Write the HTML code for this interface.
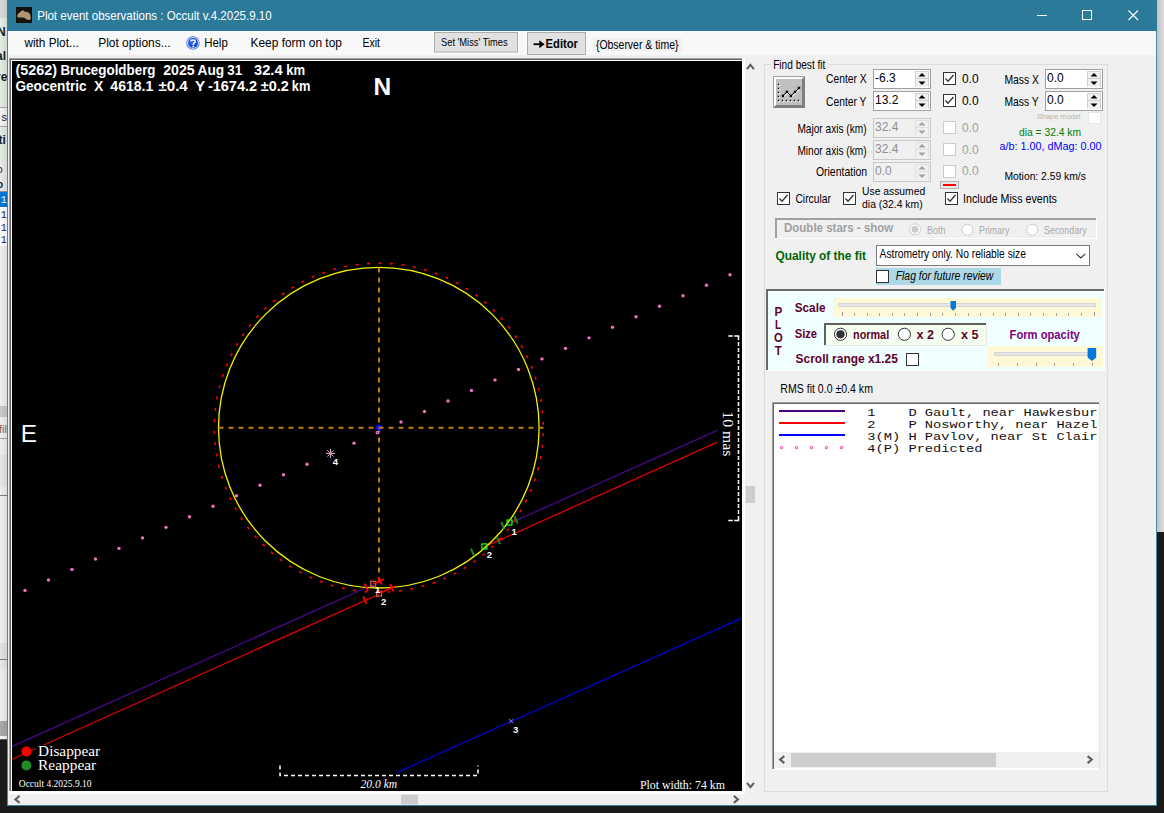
<!DOCTYPE html>
<html><head><meta charset="utf-8"><title>Plot event observations : Occult v.4.2025.9.10</title>
<style>html,body{margin:0;padding:0;background:#1b1b1b;overflow:hidden} svg{display:block} text{white-space:pre}</style></head>
<body><svg width="1164" height="813" viewBox="0 0 1164 813">
<rect x="0" y="0" width="1164" height="813" fill="#1b1b1b" />
<rect x="0" y="0" width="7" height="806" fill="#eeeeee" />
<rect x="0" y="0" width="7" height="18" fill="#d9d9d9" />
<rect x="0" y="18" width="7" height="89" fill="#e3ede3" />
<rect x="0" y="107" width="7" height="1" fill="#a8a8a8" />
<rect x="0" y="108" width="7" height="18" fill="#f4f4f4" />
<rect x="0" y="126" width="7" height="1" fill="#a8a8a8" />
<rect x="0" y="127" width="7" height="32" fill="#e3ede3" />
<rect x="0" y="159" width="7" height="33" fill="#e9e9e9" />
<rect x="0" y="191" width="7" height="1" fill="#909090" />
<rect x="0" y="192" width="7" height="15" fill="#0078d7" />
<rect x="0" y="207" width="7" height="39" fill="#ffffff" />
<rect x="0" y="246" width="7" height="160" fill="#efefef" />
<rect x="0" y="406" width="7" height="11" fill="#c9c9c9" />
<rect x="0" y="438" width="7" height="1" fill="#a0a0a0" />
<rect x="0" y="455" width="7" height="31" fill="#e6e6e6" />
<rect x="0" y="495" width="7" height="1" fill="#808080" />
<rect x="0" y="643" width="7" height="16" fill="#e3e3e3" />
<rect x="0" y="659" width="7" height="1" fill="#808080" />
<rect x="0" y="660" width="7" height="8" fill="#e8e8e8" />
<rect x="0" y="721" width="7" height="15" fill="#a9a9a9" />
<rect x="0" y="736" width="7" height="3" fill="#f4f4f4" />
<rect x="0" y="739" width="7" height="1" fill="#606060" />
<rect x="0" y="740" width="7" height="73" fill="#1b1b1b" />
<rect x="0" y="0" width="7" height="740" fill="url(#lg)" />
<text transform="translate(-3.00,36.00)" font-family="Liberation Sans" font-size="12" font-weight="bold" fill="#1a1a1a" >N</text>
<text transform="translate(-4.00,59.70)" font-family="Liberation Sans" font-size="12" font-weight="bold" fill="#1a1a1a" >al</text>
<text transform="translate(-4.00,80.90)" font-family="Liberation Sans" font-size="12" font-weight="bold" fill="#1a1a1a" >re</text>
<text transform="translate(1.50,121.00)" font-family="Liberation Sans" font-size="11" fill="#1a1a50" >s</text>
<text transform="translate(-1.50,144.00)" font-family="Liberation Sans" font-size="12" font-weight="bold" fill="#1a1a1a" >ti</text>
<text transform="translate(-3.00,173.00)" font-family="Liberation Sans" font-size="10" fill="#1a1a1a" >o</text>
<text transform="translate(-3.00,187.70)" font-family="Liberation Sans" font-size="10" font-weight="bold" fill="#1a1a1a" >o</text>
<text transform="translate(0.80,203.20)" font-family="Liberation Mono" font-size="10" fill="#ffffff" >1</text>
<text transform="translate(0.80,218.00)" font-family="Liberation Mono" font-size="10" fill="#202050" >1</text>
<text transform="translate(0.80,230.60)" font-family="Liberation Mono" font-size="10" fill="#202050" >1</text>
<text transform="translate(0.80,243.20)" font-family="Liberation Mono" font-size="10" fill="#202050" >1</text>
<text transform="translate(-1.00,433.00)" font-family="Liberation Sans" font-size="11" fill="#806060" >fil</text>
<defs><linearGradient id="rg" x1="0" x2="1"><stop offset="0" stop-color="#c4c4c4"/><stop offset="1" stop-color="#dcdcdc"/></linearGradient><linearGradient id="lg" x1="0" x2="1"><stop offset="0" stop-color="#000" stop-opacity="0"/><stop offset="1" stop-color="#000" stop-opacity="0.08"/></linearGradient></defs>
<rect x="1157" y="0" width="7" height="532" fill="url(#rg)" />
<rect x="1157" y="532" width="7" height="281" fill="#1b1b1b" />
<rect x="7" y="0" width="1150" height="806" fill="#2c7a9a" />
<rect x="7" y="31" width="1" height="775" fill="#468aa6" />
<rect x="1156" y="31" width="1" height="775" fill="#468aa6" />
<rect x="7" y="805" width="1150" height="1" fill="#3a7f9c" />
<rect x="8" y="31" width="1148" height="774" fill="#f0f0f0" />
<rect x="16" y="7" width="16" height="16" fill="#15110d" />
<path d="M17.2,16.6 C17.3,15 17.8,14.2 18.4,13.6 C19.4,12.4 20.4,11.5 21.4,10.9 C22.2,10.4 22.8,10.1 23.3,10.2 C23.9,10.4 24,11.2 24.3,11.6 C25.2,12 26.2,11.9 27,12.1 C28,12.3 28.8,12.6 29.3,13.1 C30,14 30.4,15 30.5,16.1 C30.8,17 30.9,18 30.7,18.8 C30.3,19.6 29.5,20 28.8,20 C27.8,20 27.1,19.8 26.5,19.3 C25.6,18.8 25,18.1 24.3,17.8 C23.3,17.5 22.3,17.6 21.4,17.5 C20.3,17.5 19.3,17.7 18.4,17.5 C17.7,17.3 17.2,17 17.2,16.6 Z" fill="#b39470"/>
<text transform="translate(37.20,20.00) scale(0.9621,1.0)" font-family="Liberation Sans" font-size="12" fill="#ffffff" >Plot event observations : Occult v.4.2025.9.10</text>
<line x1="1037" y1="15.5" x2="1047" y2="15.5" stroke="#ffffff" stroke-width="1" />
<rect x="1082.5" y="10.5" width="9" height="9" fill="none" stroke="#ffffff" stroke-width="1"/>
<line x1="1128.5" y1="10.5" x2="1138" y2="20" stroke="#ffffff" stroke-width="1.1" />
<line x1="1138" y1="10.5" x2="1128.5" y2="20" stroke="#ffffff" stroke-width="1.1" />
<rect x="8" y="31" width="1148" height="24" fill="#f8f8f8" />
<text transform="translate(24.38,46.90) scale(0.9836,1.0)" font-family="Liberation Sans" font-size="12" fill="#000" >with Plot...</text>
<text transform="translate(98.20,46.90) scale(0.9976,1.0)" font-family="Liberation Sans" font-size="12" fill="#000" >Plot options...</text>
<defs><radialGradient id="hg" cx="0.4" cy="0.35" r="0.7"><stop offset="0" stop-color="#3f70ff"/><stop offset="1" stop-color="#0a3cc0"/></radialGradient></defs>
<circle cx="193" cy="43" r="6.8" fill="#5f86d2"/>
<circle cx="193" cy="43" r="5.8" fill="#d8e6fb"/>
<circle cx="193" cy="43" r="4.9" fill="url(#hg)"/>
<path d="M191,41.3 C191,39.6 195.2,39.4 195.2,41.4 C195.2,42.9 193.2,43 193.2,45" fill="none" stroke="#ffffff" stroke-width="1.5"/>
<rect x="192.4" y="45.9" width="1.6" height="1.5" fill="#ffffff" />
<text transform="translate(204.20,46.90) scale(0.9558,1.0)" font-family="Liberation Sans" font-size="12" fill="#000" >Help</text>
<text transform="translate(250.50,46.50) scale(0.9937,1.0)" font-family="Liberation Sans" font-size="12" fill="#000" >Keep form on top</text>
<text transform="translate(362.40,46.50) scale(0.8805,1.0)" font-family="Liberation Sans" font-size="12" fill="#000" >Exit</text>
<rect x="434.5" y="32.5" width="83" height="19.5" fill="#e1e1e1" stroke="#adadad"/>
<text transform="translate(441.00,45.90) scale(0.8469,1.0)" font-family="Liberation Sans" font-size="11" fill="#000" >Set &#x27;Miss&#x27; Times</text>
<rect x="527.5" y="32.5" width="58" height="22" fill="#e1e1e1" stroke="#adadad"/>
<path d="M533.5,44.2 H542" stroke="#000" stroke-width="1.8"/><path d="M539.3,40.2 L544.6,44.2 L539.3,48.2 Z" fill="#000"/>
<text transform="translate(545.60,48.10) scale(0.8641,1.0)" font-family="Liberation Sans" font-size="13" font-weight="bold" fill="#000" >Editor</text>
<rect x="593" y="38" width="89" height="13" fill="#f0f0f0" />
<text transform="translate(595.90,48.50) scale(0.8723,1.0)" font-family="Liberation Sans" font-size="12" fill="#000" >{Observer &amp; time}</text>
<rect x="9" y="58" width="736" height="736" fill="#ffffff" />
<rect x="9" y="58" width="733" height="1" fill="#a0a0a0" />
<rect x="9" y="58" width="1" height="733" fill="#a0a0a0" />
<rect x="10" y="59" width="732" height="1" fill="#696969" />
<rect x="10" y="59" width="1" height="732" fill="#696969" />
<rect x="11" y="60" width="731" height="1" fill="#ffffff" />
<rect x="11" y="60" width="1" height="731" fill="#ffffff" />
<rect x="12" y="61" width="730" height="730" fill="#000000" />
<svg x="12" y="61" width="730" height="730" viewBox="12 61 730 730" overflow="hidden">
<line x1="12" y1="746.5" x2="373.2" y2="584.57404" stroke="#4a0a90" stroke-width="1.2" />
<line x1="509.5" y1="523.47075" x2="742" y2="419.24100000000004" stroke="#4a0a90" stroke-width="1.2" />
<line x1="12" y1="759.3" x2="379.1" y2="594.2518399999999" stroke="#ee0000" stroke-width="1.2" />
<line x1="484.4" y1="546.90896" x2="742" y2="431.0919999999999" stroke="#ee0000" stroke-width="1.2" />
<line x1="396.6" y1="772.7" x2="742" y2="618.06442" stroke="#0000e6" stroke-width="1.2" />
<rect x="36" y="745" width="70" height="28" fill="#000000" />
<rect x="717.5" y="400" width="24" height="62" fill="#000000" />
<rect x="-1.5" y="-0.8" width="3" height="1.6" fill="#ff0000" transform="translate(380.09,263.21) rotate(0.45)"/>
<rect x="-1.5" y="-0.8" width="3" height="1.6" fill="#ff0000" transform="translate(391.56,263.70) rotate(4.45)"/>
<rect x="-1.5" y="-0.8" width="3" height="1.6" fill="#ff0000" transform="translate(402.97,264.99) rotate(8.45)"/>
<rect x="-1.5" y="-0.8" width="3" height="1.6" fill="#ff0000" transform="translate(414.26,267.07) rotate(12.45)"/>
<rect x="-1.5" y="-0.8" width="3" height="1.6" fill="#ff0000" transform="translate(425.38,269.93) rotate(16.45)"/>
<rect x="-1.5" y="-0.8" width="3" height="1.6" fill="#ff0000" transform="translate(436.27,273.57) rotate(20.45)"/>
<rect x="-1.5" y="-0.8" width="3" height="1.6" fill="#ff0000" transform="translate(446.89,277.95) rotate(24.45)"/>
<rect x="-1.5" y="-0.8" width="3" height="1.6" fill="#ff0000" transform="translate(457.17,283.07) rotate(28.45)"/>
<rect x="-1.5" y="-0.8" width="3" height="1.6" fill="#ff0000" transform="translate(467.06,288.89) rotate(32.45)"/>
<rect x="-1.5" y="-0.8" width="3" height="1.6" fill="#ff0000" transform="translate(476.53,295.38) rotate(36.45)"/>
<rect x="-1.5" y="-0.8" width="3" height="1.6" fill="#ff0000" transform="translate(485.53,302.52) rotate(40.45)"/>
<rect x="-1.5" y="-0.8" width="3" height="1.6" fill="#ff0000" transform="translate(494.00,310.27) rotate(44.45)"/>
<rect x="-1.5" y="-0.8" width="3" height="1.6" fill="#ff0000" transform="translate(501.91,318.59) rotate(48.45)"/>
<rect x="-1.5" y="-0.8" width="3" height="1.6" fill="#ff0000" transform="translate(509.22,327.44) rotate(52.45)"/>
<rect x="-1.5" y="-0.8" width="3" height="1.6" fill="#ff0000" transform="translate(515.89,336.79) rotate(56.45)"/>
<rect x="-1.5" y="-0.8" width="3" height="1.6" fill="#ff0000" transform="translate(521.90,346.57) rotate(60.45)"/>
<rect x="-1.5" y="-0.8" width="3" height="1.6" fill="#ff0000" transform="translate(527.21,356.75) rotate(64.45)"/>
<rect x="-1.5" y="-0.8" width="3" height="1.6" fill="#ff0000" transform="translate(531.80,367.28) rotate(68.45)"/>
<rect x="-1.5" y="-0.8" width="3" height="1.6" fill="#ff0000" transform="translate(535.64,378.10) rotate(72.45)"/>
<rect x="-1.5" y="-0.8" width="3" height="1.6" fill="#ff0000" transform="translate(538.72,389.16) rotate(76.45)"/>
<rect x="-1.5" y="-0.8" width="3" height="1.6" fill="#ff0000" transform="translate(541.02,400.41) rotate(80.45)"/>
<rect x="-1.5" y="-0.8" width="3" height="1.6" fill="#ff0000" transform="translate(542.53,411.79) rotate(84.45)"/>
<rect x="-1.5" y="-0.8" width="3" height="1.6" fill="#ff0000" transform="translate(543.24,423.25) rotate(88.45)"/>
<rect x="-1.5" y="-0.8" width="3" height="1.6" fill="#ff0000" transform="translate(543.15,434.73) rotate(92.45)"/>
<rect x="-1.5" y="-0.8" width="3" height="1.6" fill="#ff0000" transform="translate(542.26,446.18) rotate(96.45)"/>
<rect x="-1.5" y="-0.8" width="3" height="1.6" fill="#ff0000" transform="translate(540.57,457.54) rotate(100.45)"/>
<rect x="-1.5" y="-0.8" width="3" height="1.6" fill="#ff0000" transform="translate(538.10,468.75) rotate(104.45)"/>
<rect x="-1.5" y="-0.8" width="3" height="1.6" fill="#ff0000" transform="translate(534.84,479.76) rotate(108.45)"/>
<rect x="-1.5" y="-0.8" width="3" height="1.6" fill="#ff0000" transform="translate(530.83,490.52) rotate(112.45)"/>
<rect x="-1.5" y="-0.8" width="3" height="1.6" fill="#ff0000" transform="translate(526.08,500.97) rotate(116.45)"/>
<rect x="-1.5" y="-0.8" width="3" height="1.6" fill="#ff0000" transform="translate(520.61,511.07) rotate(120.45)"/>
<rect x="-1.5" y="-0.8" width="3" height="1.6" fill="#ff0000" transform="translate(514.45,520.76) rotate(124.45)"/>
<rect x="-1.5" y="-0.8" width="3" height="1.6" fill="#ff0000" transform="translate(507.63,529.99) rotate(128.45)"/>
<rect x="-1.5" y="-0.8" width="3" height="1.6" fill="#ff0000" transform="translate(500.18,538.73) rotate(132.45)"/>
<rect x="-1.5" y="-0.8" width="3" height="1.6" fill="#ff0000" transform="translate(492.14,546.93) rotate(136.45)"/>
<rect x="-1.5" y="-0.8" width="3" height="1.6" fill="#ff0000" transform="translate(483.55,554.54) rotate(140.45)"/>
<rect x="-1.5" y="-0.8" width="3" height="1.6" fill="#ff0000" transform="translate(474.44,561.54) rotate(144.45)"/>
<rect x="-1.5" y="-0.8" width="3" height="1.6" fill="#ff0000" transform="translate(464.87,567.88) rotate(148.45)"/>
<rect x="-1.5" y="-0.8" width="3" height="1.6" fill="#ff0000" transform="translate(454.88,573.55) rotate(152.45)"/>
<rect x="-1.5" y="-0.8" width="3" height="1.6" fill="#ff0000" transform="translate(444.53,578.50) rotate(156.45)"/>
<rect x="-1.5" y="-0.8" width="3" height="1.6" fill="#ff0000" transform="translate(433.85,582.72) rotate(160.45)"/>
<rect x="-1.5" y="-0.8" width="3" height="1.6" fill="#ff0000" transform="translate(422.90,586.18) rotate(164.45)"/>
<rect x="-1.5" y="-0.8" width="3" height="1.6" fill="#ff0000" transform="translate(411.74,588.87) rotate(168.45)"/>
<rect x="-1.5" y="-0.8" width="3" height="1.6" fill="#ff0000" transform="translate(400.41,590.77) rotate(172.45)"/>
<rect x="-1.5" y="-0.8" width="3" height="1.6" fill="#ff0000" transform="translate(388.99,591.88) rotate(176.45)"/>
<rect x="-1.5" y="-0.8" width="3" height="1.6" fill="#ff0000" transform="translate(377.51,592.19) rotate(180.45)"/>
<rect x="-1.5" y="-0.8" width="3" height="1.6" fill="#ff0000" transform="translate(366.04,591.70) rotate(184.45)"/>
<rect x="-1.5" y="-0.8" width="3" height="1.6" fill="#ff0000" transform="translate(354.63,590.41) rotate(188.45)"/>
<rect x="-1.5" y="-0.8" width="3" height="1.6" fill="#ff0000" transform="translate(343.34,588.33) rotate(192.45)"/>
<rect x="-1.5" y="-0.8" width="3" height="1.6" fill="#ff0000" transform="translate(332.22,585.47) rotate(196.45)"/>
<rect x="-1.5" y="-0.8" width="3" height="1.6" fill="#ff0000" transform="translate(321.33,581.83) rotate(200.45)"/>
<rect x="-1.5" y="-0.8" width="3" height="1.6" fill="#ff0000" transform="translate(310.71,577.45) rotate(204.45)"/>
<rect x="-1.5" y="-0.8" width="3" height="1.6" fill="#ff0000" transform="translate(300.43,572.33) rotate(208.45)"/>
<rect x="-1.5" y="-0.8" width="3" height="1.6" fill="#ff0000" transform="translate(290.54,566.51) rotate(212.45)"/>
<rect x="-1.5" y="-0.8" width="3" height="1.6" fill="#ff0000" transform="translate(281.07,560.02) rotate(216.45)"/>
<rect x="-1.5" y="-0.8" width="3" height="1.6" fill="#ff0000" transform="translate(272.07,552.88) rotate(220.45)"/>
<rect x="-1.5" y="-0.8" width="3" height="1.6" fill="#ff0000" transform="translate(263.60,545.13) rotate(224.45)"/>
<rect x="-1.5" y="-0.8" width="3" height="1.6" fill="#ff0000" transform="translate(255.69,536.81) rotate(228.45)"/>
<rect x="-1.5" y="-0.8" width="3" height="1.6" fill="#ff0000" transform="translate(248.38,527.96) rotate(232.45)"/>
<rect x="-1.5" y="-0.8" width="3" height="1.6" fill="#ff0000" transform="translate(241.71,518.61) rotate(236.45)"/>
<rect x="-1.5" y="-0.8" width="3" height="1.6" fill="#ff0000" transform="translate(235.70,508.83) rotate(240.45)"/>
<rect x="-1.5" y="-0.8" width="3" height="1.6" fill="#ff0000" transform="translate(230.39,498.65) rotate(244.45)"/>
<rect x="-1.5" y="-0.8" width="3" height="1.6" fill="#ff0000" transform="translate(225.80,488.12) rotate(248.45)"/>
<rect x="-1.5" y="-0.8" width="3" height="1.6" fill="#ff0000" transform="translate(221.96,477.30) rotate(252.45)"/>
<rect x="-1.5" y="-0.8" width="3" height="1.6" fill="#ff0000" transform="translate(218.88,466.24) rotate(256.45)"/>
<rect x="-1.5" y="-0.8" width="3" height="1.6" fill="#ff0000" transform="translate(216.58,454.99) rotate(260.45)"/>
<rect x="-1.5" y="-0.8" width="3" height="1.6" fill="#ff0000" transform="translate(215.07,443.61) rotate(264.45)"/>
<rect x="-1.5" y="-0.8" width="3" height="1.6" fill="#ff0000" transform="translate(214.36,432.15) rotate(268.45)"/>
<rect x="-1.5" y="-0.8" width="3" height="1.6" fill="#ff0000" transform="translate(214.45,420.67) rotate(272.45)"/>
<rect x="-1.5" y="-0.8" width="3" height="1.6" fill="#ff0000" transform="translate(215.34,409.22) rotate(276.45)"/>
<rect x="-1.5" y="-0.8" width="3" height="1.6" fill="#ff0000" transform="translate(217.03,397.86) rotate(280.45)"/>
<rect x="-1.5" y="-0.8" width="3" height="1.6" fill="#ff0000" transform="translate(219.50,386.65) rotate(284.45)"/>
<rect x="-1.5" y="-0.8" width="3" height="1.6" fill="#ff0000" transform="translate(222.76,375.64) rotate(288.45)"/>
<rect x="-1.5" y="-0.8" width="3" height="1.6" fill="#ff0000" transform="translate(226.77,364.88) rotate(292.45)"/>
<rect x="-1.5" y="-0.8" width="3" height="1.6" fill="#ff0000" transform="translate(231.52,354.43) rotate(296.45)"/>
<rect x="-1.5" y="-0.8" width="3" height="1.6" fill="#ff0000" transform="translate(236.99,344.33) rotate(300.45)"/>
<rect x="-1.5" y="-0.8" width="3" height="1.6" fill="#ff0000" transform="translate(243.15,334.64) rotate(304.45)"/>
<rect x="-1.5" y="-0.8" width="3" height="1.6" fill="#ff0000" transform="translate(249.97,325.41) rotate(308.45)"/>
<rect x="-1.5" y="-0.8" width="3" height="1.6" fill="#ff0000" transform="translate(257.42,316.67) rotate(312.45)"/>
<rect x="-1.5" y="-0.8" width="3" height="1.6" fill="#ff0000" transform="translate(265.46,308.47) rotate(316.45)"/>
<rect x="-1.5" y="-0.8" width="3" height="1.6" fill="#ff0000" transform="translate(274.05,300.86) rotate(320.45)"/>
<rect x="-1.5" y="-0.8" width="3" height="1.6" fill="#ff0000" transform="translate(283.16,293.86) rotate(324.45)"/>
<rect x="-1.5" y="-0.8" width="3" height="1.6" fill="#ff0000" transform="translate(292.73,287.52) rotate(328.45)"/>
<rect x="-1.5" y="-0.8" width="3" height="1.6" fill="#ff0000" transform="translate(302.72,281.85) rotate(332.45)"/>
<rect x="-1.5" y="-0.8" width="3" height="1.6" fill="#ff0000" transform="translate(313.07,276.90) rotate(336.45)"/>
<rect x="-1.5" y="-0.8" width="3" height="1.6" fill="#ff0000" transform="translate(323.75,272.68) rotate(340.45)"/>
<rect x="-1.5" y="-0.8" width="3" height="1.6" fill="#ff0000" transform="translate(334.70,269.22) rotate(344.45)"/>
<rect x="-1.5" y="-0.8" width="3" height="1.6" fill="#ff0000" transform="translate(345.86,266.53) rotate(348.45)"/>
<rect x="-1.5" y="-0.8" width="3" height="1.6" fill="#ff0000" transform="translate(357.19,264.63) rotate(352.45)"/>
<rect x="-1.5" y="-0.8" width="3" height="1.6" fill="#ff0000" transform="translate(368.61,263.52) rotate(356.45)"/>
<circle cx="378.8" cy="427.7" r="160.3" fill="none" stroke="#f2f200" stroke-width="1.3"/>
<line x1="379" y1="267.5" x2="379" y2="588" stroke="#c27e08" stroke-width="2" stroke-dasharray="5 5"/>
<circle cx="379" cy="427.6" r="3.1" fill="#0a0aff"/>
<line x1="218.5" y1="427.7" x2="544" y2="427.7" stroke="#c27e08" stroke-width="2" stroke-dasharray="5 5"/>
<circle cx="25.0" cy="590.52" r="1.7" fill="#f070c0"/>
<circle cx="48.5" cy="579.992" r="1.7" fill="#f070c0"/>
<circle cx="72.0" cy="569.464" r="1.7" fill="#f070c0"/>
<circle cx="95.5" cy="558.936" r="1.7" fill="#f070c0"/>
<circle cx="119.0" cy="548.408" r="1.7" fill="#f070c0"/>
<circle cx="142.5" cy="537.88" r="1.7" fill="#f070c0"/>
<circle cx="166.0" cy="527.3520000000001" r="1.7" fill="#f070c0"/>
<circle cx="189.5" cy="516.8240000000001" r="1.7" fill="#f070c0"/>
<circle cx="213.0" cy="506.29600000000005" r="1.7" fill="#f070c0"/>
<circle cx="236.5" cy="495.76800000000003" r="1.7" fill="#f070c0"/>
<circle cx="260.0" cy="485.24" r="1.7" fill="#f070c0"/>
<circle cx="283.5" cy="474.71200000000005" r="1.7" fill="#f070c0"/>
<circle cx="307.0" cy="464.184" r="1.7" fill="#f070c0"/>
<circle cx="354.0" cy="443.12800000000004" r="1.7" fill="#f070c0"/>
<circle cx="377.5" cy="432.6" r="1.9" fill="#f070c0"/><circle cx="377.5" cy="432.6" r="0.6" fill="#502040"/>
<circle cx="401.0" cy="422.072" r="1.7" fill="#f070c0"/>
<circle cx="424.5" cy="411.54400000000004" r="1.7" fill="#f070c0"/>
<circle cx="448.0" cy="401.016" r="1.7" fill="#f070c0"/>
<circle cx="471.5" cy="390.488" r="1.7" fill="#f070c0"/>
<circle cx="495.0" cy="379.96000000000004" r="1.7" fill="#f070c0"/>
<circle cx="518.5" cy="369.432" r="1.7" fill="#f070c0"/>
<circle cx="542.0" cy="358.904" r="1.7" fill="#f070c0"/>
<circle cx="565.5" cy="348.37600000000003" r="1.7" fill="#f070c0"/>
<circle cx="589.0" cy="337.848" r="1.7" fill="#f070c0"/>
<circle cx="612.5" cy="327.32000000000005" r="1.7" fill="#f070c0"/>
<circle cx="636.0" cy="316.79200000000003" r="1.7" fill="#f070c0"/>
<circle cx="659.5" cy="306.264" r="1.7" fill="#f070c0"/>
<circle cx="683.0" cy="295.736" r="1.7" fill="#f070c0"/>
<circle cx="706.5" cy="285.208" r="1.7" fill="#f070c0"/>
<circle cx="730.0" cy="274.68" r="1.7" fill="#f070c0"/>
<line x1="326.0" y1="453.4" x2="335.0" y2="453.4" stroke="#c8c8c8" stroke-width="1" />
<line x1="327.3180194846605" y1="450.2180194846605" x2="333.6819805153395" y2="456.58198051533947" stroke="#c8c8c8" stroke-width="1" />
<line x1="330.5" y1="448.9" x2="330.5" y2="457.9" stroke="#c8c8c8" stroke-width="1" />
<line x1="333.6819805153395" y1="450.2180194846605" x2="327.3180194846605" y2="456.58198051533947" stroke="#c8c8c8" stroke-width="1" />
<circle cx="330.5" cy="453.4" r="1.8" fill="#f070c0"/>
<rect x="370.7" y="581.3" width="5" height="5" fill="none" stroke="#d06050" stroke-width="1.2"/>
<rect x="376.6" y="591.1" width="5" height="5" fill="none" stroke="#d06050" stroke-width="1.2"/>
<line x1="364.6666781584745" y1="583.5486632910679" x2="367.9333218415255" y2="590.8513367089322" stroke="#ff0000" stroke-width="2" />
<line x1="378.4666781584745" y1="577.1486632910678" x2="381.73332184152554" y2="584.4513367089321" stroke="#ff0000" stroke-width="2" />
<line x1="373" y1="584" x2="384" y2="579" stroke="#ff0000" stroke-width="1.5" />
<line x1="363.1666781584745" y1="596.3486632910679" x2="366.4333218415255" y2="603.6513367089321" stroke="#ff0000" stroke-width="2" />
<line x1="390.26667815847446" y1="584.0486632910679" x2="393.5333218415255" y2="591.3513367089322" stroke="#ff0000" stroke-width="2" />
<line x1="380" y1="593" x2="396" y2="586" stroke="#ff0000" stroke-width="1.5" />
<rect x="507.0" y="520.0" width="5" height="5" fill="none" stroke="#20ff20" stroke-width="1.2"/>
<rect x="481.9" y="543.9" width="5" height="5" fill="none" stroke="#20ff20" stroke-width="1.2"/>
<line x1="501.1666781584745" y1="522.0486632910679" x2="504.4333218415255" y2="529.3513367089322" stroke="#208a20" stroke-width="2" />
<line x1="514.4666781584745" y1="516.1486632910678" x2="517.7333218415256" y2="523.4513367089321" stroke="#208a20" stroke-width="2" />
<line x1="470.9666781584745" y1="548.6486632910678" x2="474.23332184152554" y2="555.9513367089321" stroke="#208a20" stroke-width="2" />
<line x1="496.76667815847446" y1="536.8486632910679" x2="500.0333218415255" y2="544.1513367089321" stroke="#208a20" stroke-width="2" />
<line x1="498.4" y1="541" x2="502.8" y2="539" stroke="#ff0000" stroke-width="1.3" />
<line x1="509" y1="719" x2="513.5" y2="723.2" stroke="#8080ff" stroke-width="1" />
<line x1="513.5" y1="719" x2="509" y2="723.2" stroke="#8080ff" stroke-width="1" />
</svg>
<text transform="translate(375.10,593.00)" font-family="Liberation Sans" font-size="9.5" font-weight="bold" fill="#ffffff" >1</text>
<text transform="translate(381.00,604.50)" font-family="Liberation Sans" font-size="9.5" font-weight="bold" fill="#ffffff" >2</text>
<text transform="translate(511.40,534.50)" font-family="Liberation Sans" font-size="9.5" font-weight="bold" fill="#ffffff" >1</text>
<text transform="translate(486.70,557.50)" font-family="Liberation Sans" font-size="9.5" font-weight="bold" fill="#ffffff" >2</text>
<text transform="translate(513.10,732.80)" font-family="Liberation Sans" font-size="9.5" font-weight="bold" fill="#ffffff" >3</text>
<text transform="translate(332.80,464.50)" font-family="Liberation Sans" font-size="9.5" font-weight="bold" fill="#ffffff" >4</text>
<text transform="translate(15.40,74.80) scale(1.0275,1.0)" font-family="Liberation Sans" font-size="14" font-weight="bold" fill="#ffffff" >(5262)</text>
<text transform="translate(60.40,74.80) scale(0.9554,1.0)" font-family="Liberation Sans" font-size="14" font-weight="bold" fill="#ffffff" >Brucegoldberg</text>
<text transform="translate(163.20,74.80) scale(1.0109,1.0)" font-family="Liberation Sans" font-size="14" font-weight="bold" fill="#ffffff" >2025</text>
<text transform="translate(197.60,74.80) scale(0.9789,1.0)" font-family="Liberation Sans" font-size="14" font-weight="bold" fill="#ffffff" >Aug</text>
<text transform="translate(227.20,74.80) scale(0.9565,1.0)" font-family="Liberation Sans" font-size="14" font-weight="bold" fill="#ffffff" >31</text>
<text transform="translate(254.00,74.80) scale(1.0487,1.0)" font-family="Liberation Sans" font-size="14" font-weight="bold" fill="#ffffff" >32.4</text>
<text transform="translate(286.30,74.80) scale(0.9350,1.0)" font-family="Liberation Sans" font-size="14" font-weight="bold" fill="#ffffff" >km</text>
<text transform="translate(15.40,91.30) scale(0.9748,1.0)" font-family="Liberation Sans" font-size="14" font-weight="bold" fill="#ffffff" >Geocentric</text>
<text transform="translate(94.20,91.30) scale(0.9600,1.0)" font-family="Liberation Sans" font-size="14" font-weight="bold" fill="#ffffff" >X</text>
<text transform="translate(110.30,91.30) scale(1.0062,1.0)" font-family="Liberation Sans" font-size="14" font-weight="bold" fill="#ffffff" >4618.1</text>
<text transform="translate(158.40,91.30) scale(1.0819,1.0)" font-family="Liberation Sans" font-size="14" font-weight="bold" fill="#ffffff" >±0.4</text>
<text transform="translate(194.90,91.30) scale(1.1000,1.0)" font-family="Liberation Sans" font-size="14" font-weight="bold" fill="#ffffff" >Y</text>
<text transform="translate(207.90,91.30) scale(1.0378,1.0)" font-family="Liberation Sans" font-size="14" font-weight="bold" fill="#ffffff" >-1674.2</text>
<text transform="translate(260.80,91.30) scale(1.0307,1.0)" font-family="Liberation Sans" font-size="14" font-weight="bold" fill="#ffffff" >±0.2</text>
<text transform="translate(291.80,91.30) scale(0.9198,1.0)" font-family="Liberation Sans" font-size="14" font-weight="bold" fill="#ffffff" >km</text>
<text transform="translate(373.58,94.90) scale(1.0200,1.0)" font-family="Liberation Sans" font-size="24" font-weight="bold" fill="#ffffff" >N</text>
<text transform="translate(20.69,441.90) scale(1.0143,1.0)" font-family="Liberation Sans" font-size="24" fill="#ffffff" >E</text>
<circle cx="26.4" cy="751.5" r="5" fill="#ff0000"/>
<circle cx="26.4" cy="765.4" r="5" fill="#228b22"/>
<text transform="translate(38.10,756.40) scale(1.0930,1.0)" font-family="Liberation Serif" font-size="14" fill="#ffffff" >Disappear</text>
<text transform="translate(38.10,770.40) scale(1.0998,1.0)" font-family="Liberation Serif" font-size="14" fill="#ffffff" >Reappear</text>
<text transform="translate(18.80,786.60) scale(0.8630,1.0)" font-family="Liberation Serif" font-size="11" fill="#ffffff" >Occult 4.2025.9.10</text>
<text transform="translate(360.50,788.40) scale(0.9654,1.0)" font-family="Liberation Serif" font-size="12" font-style="italic" fill="#ffffff" >20.0 km</text>
<text transform="translate(639.90,788.80) scale(0.9098,1.0)" font-family="Liberation Serif" font-size="13" fill="#ffffff" >Plot width: 74 km</text>
<path d="M280,765.5 V775.5 H478 V765.5" fill="none" stroke="#ffffff" stroke-width="1.5" stroke-dasharray="4 3"/>
<path d="M738.5,336 V520.5" fill="none" stroke="#ffffff" stroke-width="1.5" stroke-dasharray="4 2"/>
<path d="M728.3,336 H732.8 M734.3,336 H739.2 M728.3,520.5 H732.8 M734.3,520.5 H739.2" fill="none" stroke="#ffffff" stroke-width="1.5"/>
<text transform="translate(722.7,411.3) rotate(90) scale(1.13,1.02)" font-family="Liberation Serif" font-size="14" fill="#ffffff">10 mas</text>
<path d="M746.9,69.1 L750.4,64.9 L753.9,69.1" fill="none" stroke="#606060" stroke-width="2.1"/>
<path d="M747.0,782.9 L750.5,787.1 L754.0,782.9" fill="none" stroke="#606060" stroke-width="2.1"/>
<rect x="745.5" y="486" width="9.5" height="17" fill="#cdcdcd" />
<path d="M19.6,795.9 L15.4,799.4 L19.6,802.9" fill="none" stroke="#606060" stroke-width="2.1"/>
<path d="M733.8,795.9 L738.0,799.4 L733.8,802.9" fill="none" stroke="#606060" stroke-width="2.1"/>
<rect x="401" y="794.5" width="17" height="10" fill="#cdcdcd" />
<rect x="764" y="64" width="1" height="728" fill="#dcdcdc" />
<rect x="1107" y="64" width="1" height="728" fill="#dcdcdc" />
<rect x="764" y="791" width="344" height="1" fill="#dcdcdc" />
<rect x="764" y="64" width="7" height="1" fill="#dcdcdc" />
<rect x="829" y="64" width="279" height="1" fill="#dcdcdc" />
<text transform="translate(773.20,68.60) scale(0.8422,1.0)" font-family="Liberation Sans" font-size="12" fill="#000" >Find best fit</text>
<rect x="773" y="76" width="32" height="32" fill="#a0a0a0" />
<path d="M774,77 H805 V108 H774 Z" fill="#7f7f7f"/>
<path d="M774,77 H804 L802,79 H776 V105 L774,107 Z" fill="#ffffff"/>
<rect x="776" y="79" width="26" height="26" fill="#c0c0c0" />
<rect x="778" y="84" width="1.3" height="1.3" fill="#ffffff" />
<rect x="778" y="88" width="1.3" height="1.3" fill="#ffffff" />
<rect x="778" y="92" width="1.3" height="1.3" fill="#ffffff" />
<rect x="778" y="96" width="1.3" height="1.3" fill="#ffffff" />
<rect x="778" y="100" width="1.3" height="1.3" fill="#ffffff" />
<rect x="778.9" y="84.9" width="1.2" height="1.2" fill="#ffffff"/>
<rect x="777.8" y="83.8" width="1.3" height="1.3" fill="#000"/>
<rect x="778.9" y="88.9" width="1.2" height="1.2" fill="#ffffff"/>
<rect x="777.8" y="87.8" width="1.3" height="1.3" fill="#000"/>
<rect x="778.9" y="92.9" width="1.2" height="1.2" fill="#ffffff"/>
<rect x="777.8" y="91.8" width="1.3" height="1.3" fill="#000"/>
<rect x="778.9" y="96.9" width="1.2" height="1.2" fill="#ffffff"/>
<rect x="777.8" y="95.8" width="1.3" height="1.3" fill="#000"/>
<rect x="778.9" y="100.9" width="1.2" height="1.2" fill="#ffffff"/>
<rect x="777.8" y="99.8" width="1.3" height="1.3" fill="#000"/>
<rect x="782.9" y="100.9" width="1.2" height="1.2" fill="#ffffff"/>
<rect x="781.8" y="99.8" width="1.3" height="1.3" fill="#000"/>
<rect x="786.9" y="100.9" width="1.2" height="1.2" fill="#ffffff"/>
<rect x="785.8" y="99.8" width="1.3" height="1.3" fill="#000"/>
<rect x="790.9" y="100.9" width="1.2" height="1.2" fill="#ffffff"/>
<rect x="789.8" y="99.8" width="1.3" height="1.3" fill="#000"/>
<rect x="794.9" y="100.9" width="1.2" height="1.2" fill="#ffffff"/>
<rect x="793.8" y="99.8" width="1.3" height="1.3" fill="#000"/>
<rect x="798.9" y="100.9" width="1.2" height="1.2" fill="#ffffff"/>
<rect x="797.8" y="99.8" width="1.3" height="1.3" fill="#000"/>
<polyline points="783.9,96.9 787.9,92.9 791.9,96.9 796,92.9 800,88.9" fill="none" stroke="#ffffff" stroke-width="1"/>
<polyline points="782.9,95.9 786.9,91.9 790.9,95.9 795,91.9 799,87.9" fill="none" stroke="#000" stroke-width="1"/>
<rect x="781.6999999999999" y="94.7" width="2.4" height="2.4" fill="#000" />
<rect x="785.6999999999999" y="90.7" width="2.4" height="2.4" fill="#000" />
<rect x="789.6999999999999" y="94.7" width="2.4" height="2.4" fill="#000" />
<rect x="793.8" y="90.7" width="2.4" height="2.4" fill="#000" />
<rect x="797.8" y="86.7" width="2.4" height="2.4" fill="#000" />
<text transform="translate(826.00,83.40) scale(0.8595,1.0)" font-family="Liberation Sans" font-size="12" fill="#000" >Center X</text>
<text transform="translate(826.00,105.50) scale(0.8595,1.0)" font-family="Liberation Sans" font-size="12" fill="#000" >Center Y</text>
<rect x="873.5" y="69.5" width="57" height="19" fill="#ffffff" stroke="#a0a0a0"/>
<rect x="915" y="71" width="14" height="8" fill="#f0f0f0"/>
<rect x="915" y="79" width="14" height="8" fill="#f0f0f0"/>
<path d="M915.5,86.5 V71.5 H928.5 V86.5 M915,78.5 H929" fill="none" stroke="#d0d0d0"/>
<path d="M918.5,76.5 L922,73 L925.5,76.5 Z" fill="#000"/>
<path d="M918.5,81.5 L922,85 L925.5,81.5 Z" fill="#000"/>
<text transform="translate(875.00,82.00)" font-family="Liberation Sans" font-size="12" fill="#000" >-6.3</text>
<rect x="873.5" y="91.5" width="57" height="19" fill="#ffffff" stroke="#a0a0a0"/>
<rect x="915" y="93" width="14" height="8" fill="#f0f0f0"/>
<rect x="915" y="101" width="14" height="8" fill="#f0f0f0"/>
<path d="M915.5,108.5 V93.5 H928.5 V108.5 M915,100.5 H929" fill="none" stroke="#d0d0d0"/>
<path d="M918.5,98.5 L922,95 L925.5,98.5 Z" fill="#000"/>
<path d="M918.5,103.5 L922,107 L925.5,103.5 Z" fill="#000"/>
<text transform="translate(875.00,104.00)" font-family="Liberation Sans" font-size="12" fill="#000" >13.2</text>
<rect x="943.5" y="72.5" width="12" height="12" fill="#ffffff" stroke="#333333"/>
<path d="M945.5,78.5 L948,81.3 L953.5,75" fill="none" stroke="#333333" stroke-width="1.3"/>
<rect x="943.5" y="94.5" width="12" height="12" fill="#ffffff" stroke="#333333"/>
<path d="M945.5,100.5 L948,103.3 L953.5,97" fill="none" stroke="#333333" stroke-width="1.3"/>
<text transform="translate(961.90,82.60)" font-family="Liberation Sans" font-size="12" fill="#000" >0.0</text>
<text transform="translate(961.90,104.60)" font-family="Liberation Sans" font-size="12" fill="#000" >0.0</text>
<text transform="translate(1004.40,83.60) scale(0.8649,1.0)" font-family="Liberation Sans" font-size="12" fill="#000" >Mass X</text>
<text transform="translate(1004.40,105.60) scale(0.8649,1.0)" font-family="Liberation Sans" font-size="12" fill="#000" >Mass Y</text>
<rect x="1045.5" y="69.5" width="57" height="19" fill="#ffffff" stroke="#a0a0a0"/>
<rect x="1087" y="71" width="14" height="8" fill="#f0f0f0"/>
<rect x="1087" y="79" width="14" height="8" fill="#f0f0f0"/>
<path d="M1087.5,86.5 V71.5 H1100.5 V86.5 M1087,78.5 H1101" fill="none" stroke="#d0d0d0"/>
<path d="M1090.5,76.5 L1094,73 L1097.5,76.5 Z" fill="#000"/>
<path d="M1090.5,81.5 L1094,85 L1097.5,81.5 Z" fill="#000"/>
<text transform="translate(1047.00,82.00)" font-family="Liberation Sans" font-size="12" fill="#000" >0.0</text>
<rect x="1045.5" y="91.5" width="57" height="19" fill="#ffffff" stroke="#a0a0a0"/>
<rect x="1087" y="93" width="14" height="8" fill="#f0f0f0"/>
<rect x="1087" y="101" width="14" height="8" fill="#f0f0f0"/>
<path d="M1087.5,108.5 V93.5 H1100.5 V108.5 M1087,100.5 H1101" fill="none" stroke="#d0d0d0"/>
<path d="M1090.5,98.5 L1094,95 L1097.5,98.5 Z" fill="#000"/>
<path d="M1090.5,103.5 L1094,107 L1097.5,103.5 Z" fill="#000"/>
<text transform="translate(1047.00,104.00)" font-family="Liberation Sans" font-size="12" fill="#000" >0.0</text>
<text transform="translate(1036.90,118.70) scale(0.9247,1.0)" font-family="Liberation Sans" font-size="8" fill="#b4b4b4" >Shape model</text>
<rect x="1088.5" y="112.5" width="12" height="11" fill="#ffffff" stroke="#e6e6e6"/>
<text transform="translate(797.40,132.70) scale(0.8438,1.0)" font-family="Liberation Sans" font-size="12" fill="#000" >Major axis (km)</text>
<text transform="translate(797.40,154.70) scale(0.8438,1.0)" font-family="Liberation Sans" font-size="12" fill="#000" >Minor axis (km)</text>
<text transform="translate(815.90,175.70) scale(0.8738,1.0)" font-family="Liberation Sans" font-size="12" fill="#000" >Orientation</text>
<rect x="873.5" y="118.5" width="57" height="19" fill="#f0f0f0" stroke="#c8c8c8"/>
<rect x="915" y="120" width="14" height="8" fill="#f0f0f0"/>
<rect x="915" y="128" width="14" height="8" fill="#f0f0f0"/>
<path d="M915.5,135.5 V120.5 H928.5 V135.5 M915,127.5 H929" fill="none" stroke="#e0e0e0"/>
<path d="M918.5,125.5 L922,122 L925.5,125.5 Z" fill="#a0a0a0"/>
<path d="M918.5,130.5 L922,134 L925.5,130.5 Z" fill="#a0a0a0"/>
<text transform="translate(875.00,131.00)" font-family="Liberation Sans" font-size="12" fill="#8f8f8f" >32.4</text>
<rect x="873.5" y="140.5" width="57" height="19" fill="#f0f0f0" stroke="#c8c8c8"/>
<rect x="915" y="142" width="14" height="8" fill="#f0f0f0"/>
<rect x="915" y="150" width="14" height="8" fill="#f0f0f0"/>
<path d="M915.5,157.5 V142.5 H928.5 V157.5 M915,149.5 H929" fill="none" stroke="#e0e0e0"/>
<path d="M918.5,147.5 L922,144 L925.5,147.5 Z" fill="#a0a0a0"/>
<path d="M918.5,152.5 L922,156 L925.5,152.5 Z" fill="#a0a0a0"/>
<text transform="translate(875.00,153.00)" font-family="Liberation Sans" font-size="12" fill="#8f8f8f" >32.4</text>
<rect x="873.5" y="162.5" width="57" height="19" fill="#f0f0f0" stroke="#c8c8c8"/>
<rect x="915" y="164" width="14" height="8" fill="#f0f0f0"/>
<rect x="915" y="172" width="14" height="8" fill="#f0f0f0"/>
<path d="M915.5,179.5 V164.5 H928.5 V179.5 M915,171.5 H929" fill="none" stroke="#e0e0e0"/>
<path d="M918.5,169.5 L922,166 L925.5,169.5 Z" fill="#a0a0a0"/>
<path d="M918.5,174.5 L922,178 L925.5,174.5 Z" fill="#a0a0a0"/>
<text transform="translate(875.00,175.00)" font-family="Liberation Sans" font-size="12" fill="#8f8f8f" >0.0</text>
<rect x="943.5" y="121.5" width="12" height="12" fill="#ffffff" stroke="#cccccc"/>
<rect x="943.5" y="143.5" width="12" height="12" fill="#ffffff" stroke="#cccccc"/>
<rect x="943.5" y="165.5" width="12" height="12" fill="#ffffff" stroke="#cccccc"/>
<text transform="translate(961.90,131.70)" font-family="Liberation Sans" font-size="12" fill="#a0a0a0" >0.0</text>
<text transform="translate(961.90,153.70)" font-family="Liberation Sans" font-size="12" fill="#a0a0a0" >0.0</text>
<text transform="translate(961.90,174.70)" font-family="Liberation Sans" font-size="12" fill="#a0a0a0" >0.0</text>
<text transform="translate(1019.00,136.00) scale(0.9368,1.0)" font-family="Liberation Sans" font-size="11" fill="#008000" >dia = 32.4 km</text>
<text transform="translate(999.50,150.00) scale(0.9822,1.0)" font-family="Liberation Sans" font-size="11" fill="#0000ff" >a/b: 1.00, dMag: 0.00</text>
<text transform="translate(1004.40,179.80) scale(0.9392,1.0)" font-family="Liberation Sans" font-size="11" fill="#000" >Motion: 2.59 km/s</text>
<rect x="940.5" y="181.5" width="18" height="7" fill="#e8e8e8" stroke="#b4b4b4"/>
<rect x="943" y="184" width="13" height="2" fill="#ff0000" />
<rect x="777.5" y="192.5" width="12" height="12" fill="#ffffff" stroke="#333333"/>
<path d="M779.5,198.5 L782,201.3 L787.5,195" fill="none" stroke="#333333" stroke-width="1.3"/>
<text transform="translate(795.40,202.60) scale(0.8611,1.0)" font-family="Liberation Sans" font-size="12" fill="#000" >Circular</text>
<rect x="843.5" y="192.5" width="12" height="12" fill="#ffffff" stroke="#333333"/>
<path d="M845.5,198.5 L848,201.3 L853.5,195" fill="none" stroke="#333333" stroke-width="1.3"/>
<text transform="translate(862.10,195.30) scale(0.9384,1.0)" font-family="Liberation Sans" font-size="11" fill="#000" >Use assumed</text>
<text transform="translate(862.10,207.70) scale(0.9445,1.0)" font-family="Liberation Sans" font-size="11" fill="#000" >dia (32.4 km)</text>
<rect x="945.5" y="192.5" width="12" height="12" fill="#ffffff" stroke="#333333"/>
<path d="M947.5,198.5 L950,201.3 L955.5,195" fill="none" stroke="#333333" stroke-width="1.3"/>
<text transform="translate(963.11,202.90) scale(0.8910,1.0)" font-family="Liberation Sans" font-size="12" fill="#000" >Include Miss events</text>
<rect x="775" y="218" width="322" height="21" fill="#f0f0f0" />
<rect x="775" y="218" width="322" height="2" fill="#a0a0a0" />
<rect x="775" y="218" width="2" height="21" fill="#a0a0a0" />
<rect x="775" y="238" width="322" height="1" fill="#ffffff" />
<rect x="1096" y="218" width="1" height="21" fill="#ffffff" />
<text transform="translate(784.00,232.30) scale(0.9592,1.0)" font-family="Liberation Sans" font-size="12" font-weight="bold" fill="#a0a0a0" >Double stars - show</text>
<circle cx="915" cy="229.3" r="5.5" fill="#ffffff" stroke="#cccccc"/>
<circle cx="915" cy="229.3" r="3.5" fill="#cccccc"/>
<text transform="translate(927.10,233.60) scale(0.8456,1.0)" font-family="Liberation Sans" font-size="10.5" fill="#a8a8a8" >Both</text>
<circle cx="967.4" cy="229.8" r="5.5" fill="#ffffff" stroke="#cccccc"/>
<text transform="translate(979.00,233.60) scale(0.8398,1.0)" font-family="Liberation Sans" font-size="10.5" fill="#a8a8a8" >Primary</text>
<circle cx="1032.3" cy="229.8" r="5.5" fill="#ffffff" stroke="#cccccc"/>
<text transform="translate(1044.00,233.60) scale(0.8499,1.0)" font-family="Liberation Sans" font-size="10.5" fill="#a8a8a8" >Secondary</text>
<text transform="translate(775.50,259.60) scale(0.9909,1.0)" font-family="Liberation Sans" font-size="12" font-weight="bold" fill="#006400" >Quality of the fit</text>
<rect x="876.5" y="245.5" width="213" height="20" fill="#ffffff" stroke="#7a7a7a"/>
<text transform="translate(879.60,258.40) scale(0.8554,1.0)" font-family="Liberation Sans" font-size="12" fill="#000" >Astrometry only. No reliable size</text>
<path d="M1076.3,253.8 L1080.8,258 L1085.3,253.8" fill="none" stroke="#333" stroke-width="1.1"/>
<rect x="876" y="268" width="125" height="17" fill="#add8e6" />
<rect x="876.5" y="270.5" width="12" height="12" fill="#ffffff" stroke="#333333"/>
<text transform="translate(895.70,280.30) scale(0.8663,1.0)" font-family="Liberation Sans" font-size="12" font-style="italic" fill="#000" >Flag for future review</text>
<rect x="766" y="289" width="339" height="82" fill="#f0ffff" />
<rect x="766" y="289" width="339" height="2" fill="#696969" />
<rect x="766" y="289" width="2" height="82" fill="#696969" />
<rect x="766" y="370" width="339" height="1" fill="#ffffff" />
<rect x="1104" y="289" width="1" height="82" fill="#ffffff" />
<text transform="translate(774.60,315.90) scale(0.9250,1.0)" font-family="Liberation Sans" font-size="12.5" font-weight="bold" fill="#600030" >P</text>
<text transform="translate(775.00,328.80) scale(0.8125,1.0)" font-family="Liberation Sans" font-size="12.5" font-weight="bold" fill="#600030" >L</text>
<text transform="translate(774.00,341.70) scale(0.9000,1.0)" font-family="Liberation Sans" font-size="12.5" font-weight="bold" fill="#600030" >O</text>
<text transform="translate(774.70,355.00) scale(0.9125,1.0)" font-family="Liberation Sans" font-size="12.5" font-weight="bold" fill="#600030" >T</text>
<text transform="translate(794.70,311.80) scale(0.9815,1.0)" font-family="Liberation Sans" font-size="12" font-weight="bold" fill="#600030" >Scale</text>
<rect x="833" y="298" width="69" height="19" fill="#fff8d6" />
<rect x="833" y="298" width="269" height="19" fill="#fff8d6" />
<rect x="838.5" y="303.5" width="257" height="3" fill="#e6e6e6" stroke="#d6d6d6"/>
<rect x="842" y="312" width="1" height="4" fill="#a0a0a0" />
<rect x="854" y="313" width="1" height="3" fill="#a0a0a0" />
<rect x="867" y="313" width="1" height="3" fill="#a0a0a0" />
<rect x="879" y="313" width="1" height="3" fill="#a0a0a0" />
<rect x="892" y="313" width="1" height="3" fill="#a0a0a0" />
<rect x="904" y="313" width="1" height="3" fill="#a0a0a0" />
<rect x="917" y="313" width="1" height="3" fill="#a0a0a0" />
<rect x="930" y="313" width="1" height="3" fill="#a0a0a0" />
<rect x="942" y="313" width="1" height="3" fill="#a0a0a0" />
<rect x="955" y="313" width="1" height="3" fill="#a0a0a0" />
<rect x="968" y="313" width="1" height="3" fill="#a0a0a0" />
<rect x="980" y="313" width="1" height="3" fill="#a0a0a0" />
<rect x="993" y="313" width="1" height="3" fill="#a0a0a0" />
<rect x="1005" y="313" width="1" height="3" fill="#a0a0a0" />
<rect x="1018" y="313" width="1" height="3" fill="#a0a0a0" />
<rect x="1030" y="313" width="1" height="3" fill="#a0a0a0" />
<rect x="1043" y="313" width="1" height="3" fill="#a0a0a0" />
<rect x="1056" y="313" width="1" height="3" fill="#a0a0a0" />
<rect x="1068" y="313" width="1" height="3" fill="#a0a0a0" />
<rect x="1081" y="313" width="1" height="3" fill="#a0a0a0" />
<rect x="1094" y="312" width="1" height="4" fill="#a0a0a0" />
<path d="M950.5,301 H956 V308 L953.2,310.8 L950.5,308 Z" fill="#0078d7"/>
<text transform="translate(794.70,337.50) scale(0.9327,1.0)" font-family="Liberation Sans" font-size="12" font-weight="bold" fill="#600030" >Size</text>
<rect x="824" y="323" width="163" height="23" fill="#f5fff0" />
<rect x="824" y="323" width="163" height="2" fill="#606060" />
<rect x="824" y="323" width="2" height="23" fill="#606060" />
<rect x="824" y="345" width="163" height="1" fill="#e8e8e8" />
<rect x="986" y="323" width="1" height="23" fill="#e8e8e8" />
<circle cx="840.5" cy="334.3" r="6.1" fill="#ffffff" stroke="#333333"/>
<circle cx="840.5" cy="334.3" r="4.1" fill="#333333"/>
<text transform="translate(853.10,338.60) scale(0.9024,1.0)" font-family="Liberation Sans" font-size="12" font-weight="bold" fill="#600030" >normal</text>
<circle cx="904.4" cy="334.3" r="6.1" fill="#ffffff" stroke="#333333"/>
<text transform="translate(916.60,338.50) scale(1.0101,1.0)" font-family="Liberation Sans" font-size="12.5" font-weight="bold" fill="#600030" >x 2</text>
<circle cx="948.2" cy="334.3" r="6.1" fill="#ffffff" stroke="#333333"/>
<text transform="translate(960.90,338.50) scale(1.0101,1.0)" font-family="Liberation Sans" font-size="12.5" font-weight="bold" fill="#600030" >x 5</text>
<text transform="translate(1009.60,338.60) scale(0.9330,1.0)" font-family="Liberation Sans" font-size="12" font-weight="bold" fill="#800080" >Form opacity</text>
<rect x="988" y="346" width="115" height="21" fill="#fff8d6" />
<rect x="994.5" y="352.5" width="101" height="3" fill="#e6e6e6" stroke="#d6d6d6"/>
<rect x="998" y="363" width="1" height="3" fill="#a0a0a0" />
<rect x="1017" y="363" width="1" height="3" fill="#a0a0a0" />
<rect x="1036" y="363" width="1" height="3" fill="#a0a0a0" />
<rect x="1054" y="363" width="1" height="3" fill="#a0a0a0" />
<rect x="1073" y="363" width="1" height="3" fill="#a0a0a0" />
<rect x="1092" y="363" width="1" height="3" fill="#a0a0a0" />
<path d="M1087.6,348 H1096.2 V357.5 L1091.9,361 L1087.6,357.5 Z" fill="#0078d7"/>
<text transform="translate(795.60,363.20) scale(0.9957,1.0)" font-family="Liberation Sans" font-size="12" font-weight="bold" fill="#600030" >Scroll range x1.25</text>
<rect x="906.5" y="353.5" width="12" height="12" fill="#ffffff" stroke="#333333"/>
<text transform="translate(780.30,392.60) scale(0.8805,1.0)" font-family="Liberation Sans" font-size="12" fill="#000" >RMS fit 0.0 ±0.4 km</text>
<rect x="772" y="402" width="327" height="368" fill="#ffffff" />
<rect x="772" y="402" width="327" height="1" fill="#a0a0a0" />
<rect x="772" y="402" width="1" height="368" fill="#a0a0a0" />
<rect x="773" y="403" width="326" height="1" fill="#696969" />
<rect x="773" y="403" width="1" height="366" fill="#696969" />
<rect x="772" y="769" width="328" height="1" fill="#ffffff" />
<rect x="1099" y="402" width="1" height="368" fill="#e3e3e3" />
<rect x="779" y="410" width="66" height="2" fill="#4b0082" />
<rect x="779" y="422" width="66" height="2" fill="#ff0000" />
<rect x="779" y="434" width="66" height="2" fill="#0000ff" />
<circle cx="781.5" cy="447.6" r="1.15" fill="none" stroke="#ff50b4" stroke-width="1.1"/>
<circle cx="796.5" cy="447.6" r="1.15" fill="none" stroke="#ff50b4" stroke-width="1.1"/>
<circle cx="811.5" cy="447.6" r="1.15" fill="none" stroke="#ff50b4" stroke-width="1.1"/>
<circle cx="826.4" cy="447.6" r="1.15" fill="none" stroke="#ff50b4" stroke-width="1.1"/>
<circle cx="841.5" cy="447.6" r="1.15" fill="none" stroke="#ff50b4" stroke-width="1.1"/>
<svg x="774" y="404" width="324" height="346" viewBox="774 404 324 346">
<text transform="translate(867.30,415.90) scale(1.1930,1.0)" font-family="Liberation Mono" font-size="11.5" fill="#101010" >1    D Gault, near Hawkesbur</text>
<text transform="translate(867.30,427.77) scale(1.1930,1.0)" font-family="Liberation Mono" font-size="11.5" fill="#101010" >2    P Nosworthy, near Hazel</text>
<text transform="translate(867.30,439.64) scale(1.1930,1.0)" font-family="Liberation Mono" font-size="11.5" fill="#101010" >3(M) H Pavlov, near St Clair</text>
<text transform="translate(867.30,451.51) scale(1.1930,1.0)" font-family="Liberation Mono" font-size="11.5" fill="#101010" >4(P) Predicted</text>
</svg>
<rect x="774" y="752" width="325" height="16" fill="#f0f0f0" />
<rect x="791" y="753" width="205" height="14" fill="#cdcdcd" />
<path d="M784.3000000000001,756.1 L780.1,759.6 L784.3000000000001,763.1" fill="none" stroke="#606060" stroke-width="2.1"/>
<path d="M1087.6000000000001,756.1 L1091.8,759.6 L1087.6000000000001,763.1" fill="none" stroke="#606060" stroke-width="2.1"/>
</svg></body></html>
